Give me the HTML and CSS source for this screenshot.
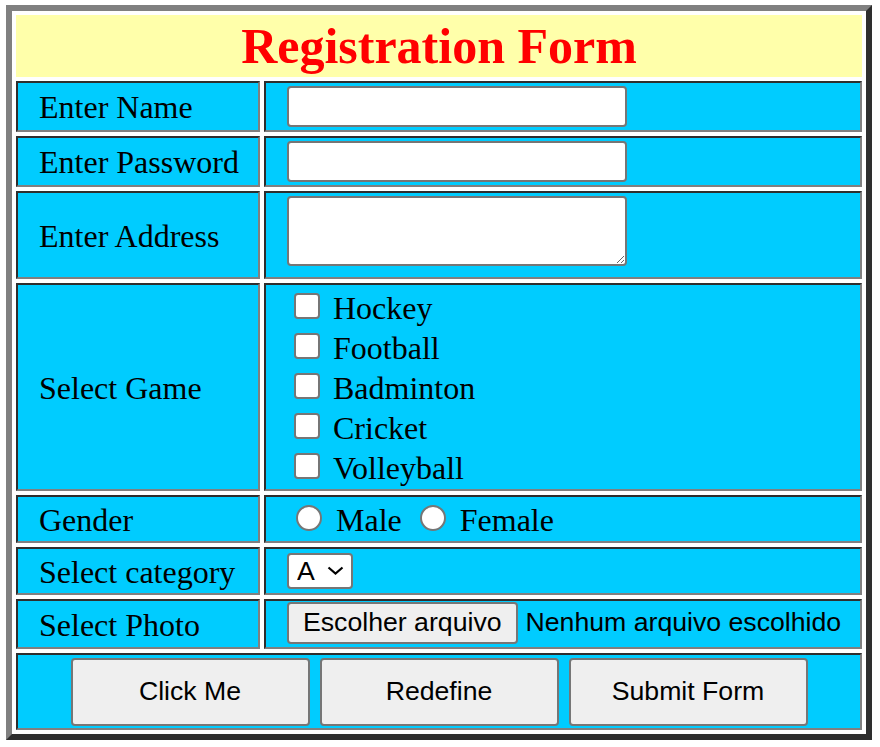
FILE: index.html
```html
<!DOCTYPE html>
<html lang="pt">
<head>
<meta charset="utf-8">
<title>Registration Form</title>
<link rel="stylesheet" href="styles.css">
</head>
<body>
<form class="frame">
  <div class="grid">
    <div class="head">Registration Form</div>

    <div class="cell label">Enter Name</div>
    <div class="cell field"><input class="text" type="text"></div>

    <div class="cell label">Enter Password</div>
    <div class="cell field"><input class="text" type="password"></div>

    <div class="cell label">Enter Address</div>
    <div class="cell field top"><textarea class="area"></textarea></div>

    <div class="cell label">Select Game</div>
    <div class="cell field games">
      <label class="opt"><input type="checkbox" class="box">Hockey</label>
      <label class="opt"><input type="checkbox" class="box">Football</label>
      <label class="opt"><input type="checkbox" class="box">Badminton</label>
      <label class="opt"><input type="checkbox" class="box">Cricket</label>
      <label class="opt"><input type="checkbox" class="box">Volleyball</label>
    </div>

    <div class="cell label">Gender</div>
    <div class="cell field">
      <label class="ropt"><input type="radio" name="gender" class="radio">Male</label>
      <label class="ropt second"><input type="radio" name="gender" class="radio">Female</label>
    </div>

    <div class="cell label">Select category</div>
    <div class="cell field">
      <span class="selwrap">
        <select class="sel"><option>A</option><option>B</option><option>C</option></select>
        <svg class="chev" width="17" height="9" viewBox="0 0 17 9"><polyline points="1.5,1.5 8.5,7.5 15.5,1.5" fill="none" stroke="#000" stroke-width="2.2"/></svg>
      </span>
    </div>

    <div class="cell label">Select Photo</div>
    <div class="cell field">
      <span class="filebtn">Escolher arquivo</span>
      <span class="filetxt">Nenhum arquivo escolhido</span>
    </div>

    <div class="cell actions">
      <button type="button" class="btn">Click Me</button>
      <button type="reset" class="btn">Redefine</button>
      <button type="submit" class="btn">Submit Form</button>
    </div>
  </div>
</form>
</body>
</html>
```

FILE: styles.css
```css
html, body {
  background: #ffffff;
}

body {
  margin: 5px 0 0 6px;
  font-family: "Liberation Serif", "Times New Roman", serif;
  font-size: 32px;
  color: #000000;
}

.frame {
  display: block;
  width: 866px;
  box-sizing: border-box;
  margin: 0;
  padding: 4px;
  border: 6px solid;
  border-color: #808080 #2e2e2e #2e2e2e #808080;
  background: #ffffff;
}

.grid {
  display: grid;
  grid-template-columns: 244px 598px;
  grid-template-rows: 62px 51px 51px 88px 208px 48px 48px 50px 77px;
  gap: 4px;
}

.head {
  grid-column: 1 / -1;
  background: #ffffaa;
  color: #ff0000;
  font-weight: bold;
  font-size: 50px;
  display: flex;
  align-items: center;
  justify-content: center;
  white-space: nowrap;
}

.cell {
  box-sizing: border-box;
  background: #00ccff;
  border: 2px solid;
  border-color: #2e2e2e #808080 #808080 #2e2e2e;
  padding: 0 0 0 21px;
  display: flex;
  align-items: center;
  white-space: nowrap;
  overflow: visible;
}

.label {
  padding-top: 2px;
}

.field.top {
  align-items: flex-start;
  padding-top: 3px;
}

.text {
  box-sizing: border-box;
  width: 340px;
  height: 41px;
  margin: 0;
  padding: 2px 4px;
  border: 2px solid #767676;
  border-radius: 4px;
  background: #ffffff;
  font-family: "Liberation Sans", Arial, sans-serif;
  font-size: 26.67px;
}

.area {
  box-sizing: border-box;
  width: 340px;
  height: 70px;
  margin: 0;
  padding: 4px;
  border: 2px solid #767676;
  border-radius: 4px;
  background: #ffffff;
  font-family: "Liberation Mono", monospace;
  font-size: 26.67px;
}

.games {
  flex-direction: column;
  align-items: flex-start;
  justify-content: center;
}

.opt {
  height: 40px;
  display: flex;
  align-items: center;
  padding-top: 2px;
  box-sizing: border-box;
}

.box {
  appearance: none;
  -webkit-appearance: none;
  box-sizing: border-box;
  width: 26px;
  height: 26px;
  margin: -4px 13px 0 7px;
  border: 2px solid #767676;
  border-radius: 4px;
  background: #ffffff;
}

.ropt {
  display: flex;
  align-items: center;
  padding-top: 2px;
}

.radio {
  appearance: none;
  -webkit-appearance: none;
  box-sizing: border-box;
  width: 26px;
  height: 26px;
  margin: -4px 14px 0 9px;
  border: 2px solid #767676;
  border-radius: 50%;
  background: #ffffff;
}

.ropt.second .radio {
  margin-left: 18px;
}

.selwrap {
  position: relative;
  display: inline-flex;
}

.sel {
  appearance: none;
  -webkit-appearance: none;
  box-sizing: border-box;
  width: 66px;
  height: 36px;
  margin: 0;
  padding: 0 0 0 8px;
  border: 2px solid #767676;
  border-radius: 4px;
  background: #ffffff;
  color: #000000;
  font-family: "Liberation Sans", Arial, sans-serif;
  font-size: 26.67px;
}

.chev {
  position: absolute;
  left: 40px;
  top: 13px;
  pointer-events: none;
}

.filebtn {
  box-sizing: border-box;
  height: 42px;
  padding: 0 14px;
  margin-right: 8px;
  margin-top: -3px;
  display: inline-flex;
  align-items: center;
  border: 2px solid #767676;
  border-radius: 4px;
  background: #efefef;
  font-family: "Liberation Sans", Arial, sans-serif;
  font-size: 26.67px;
}

.filetxt {
  font-family: "Liberation Sans", Arial, sans-serif;
  font-size: 26.67px;
  margin-top: -3px;
}

.actions {
  grid-column: 1 / -1;
  justify-content: center;
  gap: 10px;
  padding: 0;
}

.btn {
  box-sizing: border-box;
  width: 239px;
  height: 68px;
  margin: 0;
  padding: 0;
  border: 2px solid #767676;
  border-radius: 4px;
  background: #efefef;
  color: #000000;
  font-family: "Liberation Sans", Arial, sans-serif;
  font-size: 26.67px;
}
```
